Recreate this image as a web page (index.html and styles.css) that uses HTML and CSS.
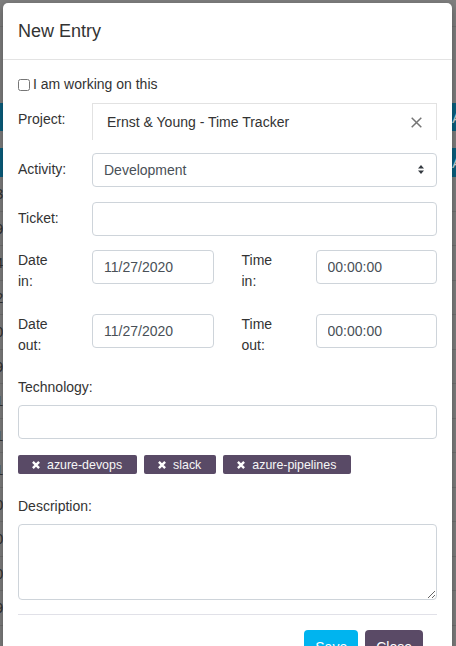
FILE: index.html
```html
<!DOCTYPE html>
<html>
<head>
<meta charset="utf-8">
<title>New Entry</title>
<link rel="stylesheet" href="styles.css">
</head>
<body>
<div class="bg">
  <div class="bg-top"></div>
  <div class="bg-nav"></div>
  <div class="bg-band b1"><span class="bg-cell">i</span><span class="bg-cell right">A</span></div>
  <div class="bg-gap"></div>
  <div class="bg-band b2"><span class="bg-cell">i</span><span class="bg-cell right">A</span></div>
  <div class="bg-row"><span class="bg-cell">3</span></div>
  <div class="bg-row"><span class="bg-cell">9</span></div>
  <div class="bg-row"><span class="bg-cell">4</span></div>
  <div class="bg-row"><span class="bg-cell">2</span></div>
  <div class="bg-row"><span class="bg-cell">0</span></div>
  <div class="bg-row"><span class="bg-cell">9</span></div>
  <div class="bg-row"><span class="bg-cell">1</span></div>
  <div class="bg-row"><span class="bg-cell">1</span></div>
  <div class="bg-row"><span class="bg-cell">1</span></div>
  <div class="bg-row"><span class="bg-cell">0</span></div>
  <div class="bg-row"><span class="bg-cell">0</span></div>
  <div class="bg-row"><span class="bg-cell">0</span></div>
  <div class="bg-row"><span class="bg-cell">9</span></div>
</div>

<div class="modal">
  <div class="modal-header">
    <h5 class="modal-title">New Entry</h5>
  </div>
  <div class="modal-body">
    <label class="check"><input type="checkbox" class="check-box"><span>I am working on this</span></label>

    <div class="row row-project">
      <label class="lbl">Project:</label>
      <div class="project-box">
        <span class="project-text">Ernst &amp; Young - Time Tracker</span>
        <svg class="clear-icon" width="11" height="11" viewBox="0 0 11 11"><path d="M0.7 0.7L10.3 10.3M10.3 0.7L0.7 10.3" stroke="#757575" stroke-width="1.5" fill="none"/></svg>
      </div>
    </div>

    <div class="row row-activity">
      <label class="lbl">Activity:</label>
      <div class="select-wrap">
        <select class="ctl sel"><option>Development</option></select>
        <svg class="sel-arrow" width="6" height="9" viewBox="0 0 4 5" preserveAspectRatio="none"><path d="M2 0L0 2h4zm0 5L0 3h4z" fill="#343a40"/></svg>
      </div>
    </div>

    <div class="row row-ticket">
      <label class="lbl">Ticket:</label>
      <input class="ctl" type="text">
    </div>

    <div class="row2 row-in">
      <div class="half">
        <label class="lbl two"><span class="wrap">Date in:</span></label>
        <input class="ctl" type="text" value="11/27/2020">
      </div>
      <div class="half">
        <label class="lbl two"><span class="wrap">Time in:</span></label>
        <input class="ctl" type="text" value="00:00:00">
      </div>
    </div>

    <div class="row2 row-out">
      <div class="half">
        <label class="lbl two"><span class="wrap">Date out:</span></label>
        <input class="ctl" type="text" value="11/27/2020">
      </div>
      <div class="half">
        <label class="lbl two"><span class="wrap">Time out:</span></label>
        <input class="ctl" type="text" value="00:00:00">
      </div>
    </div>

    <label class="block-lbl">Technology:</label>
    <input class="ctl full tech" type="text">

    <div class="tags">
      <span class="tag"><svg class="tag-x" width="8" height="8" viewBox="0 0 8 8"><path d="M0.9 0.9L7.1 7.1M7.1 0.9L0.9 7.1" stroke="#fff" stroke-width="2.4" fill="none"/></svg>azure-devops</span>
      <span class="tag"><svg class="tag-x" width="8" height="8" viewBox="0 0 8 8"><path d="M0.9 0.9L7.1 7.1M7.1 0.9L0.9 7.1" stroke="#fff" stroke-width="2.4" fill="none"/></svg>slack</span>
      <span class="tag"><svg class="tag-x" width="8" height="8" viewBox="0 0 8 8"><path d="M0.9 0.9L7.1 7.1M7.1 0.9L0.9 7.1" stroke="#fff" stroke-width="2.4" fill="none"/></svg>azure-pipelines</span>
    </div>

    <label class="block-lbl desc-lbl">Description:</label>
    <textarea class="ctl full ta"></textarea>

    <hr class="sep">

    <div class="actions">
      <button class="btn btn-save">Save</button>
      <button class="btn btn-close">Close</button>
    </div>
  </div>
</div>
</body>
</html>
```

FILE: styles.css
```css
* { box-sizing: border-box; }

html, body {
  margin: 0;
  padding: 0;
  height: 646px;
  overflow: hidden;
}

body {
  background: #7f7f7f;
  font-family: "Liberation Sans", Arial, Helvetica, sans-serif;
  font-size: 14px;
  color: #333;
  position: relative;
}

/* dimmed page behind the modal */
.bg { width: 456px; }
.bg-top { height: 27px; border-bottom: 1px solid #747474; }
.bg-nav { height: 76px; }
.bg-band {
  background: #0a6080;
  display: flex;
  justify-content: space-between;
  align-items: center;
  color: #cfd8dc;
}
.b1 { height: 28px; }
.b2 { height: 29px; }
.bg-gap { height: 17px; }
.bg-row {
  height: 34.5px;
  border-bottom: 1px solid #727272;
  display: flex;
  align-items: center;
  color: #333;
}
.bg-cell {
  margin-left: -5px;
  font-size: 15px;
}
.bg-cell.right { margin-right: -6px; }

/* modal */
.modal {
  position: absolute;
  top: 3px;
  left: 3px;
  width: 449px;
  background: #fff;
  border-radius: 5px;
  box-shadow: 0 3px 9px rgba(0, 0, 0, 0.35);
}

.modal-header {
  padding: 15px 15px;
  border-bottom: 1px solid #e3e3e3;
}

.modal-title {
  margin: 0;
  font-size: 18px;
  line-height: 26px;
  font-weight: normal;
  color: #333;
}

.modal-body {
  padding: 14px 15px 0 15px;
}

.check {
  display: flex;
  align-items: center;
  height: 21px;
  margin-bottom: 8px;
  line-height: 21px;
}

.check-box {
  width: 12px;
  height: 12px;
  margin: 0 3px 0 0;
}

.row {
  display: flex;
  align-items: flex-start;
}

.lbl {
  width: 74px;
  flex: none;
  padding-top: 6px;
  line-height: 21px;
  color: #333;
}

.lbl.two { padding-top: 0; }
.wrap { display: block; max-width: 40px; }

.row-project { margin-bottom: 13px; }
.row-activity { margin-bottom: 15px; }
.row-ticket { margin-bottom: 14px; }

.project-box {
  flex: 1;
  height: 37px;
  border: 1px solid #e2e2e2;
  border-bottom: none;
  display: flex;
  align-items: center;
  justify-content: space-between;
  padding: 0 14px 0 14px;
  color: #333;
}

.ctl {
  font-family: "Liberation Sans", Arial, Helvetica, sans-serif;
  font-size: 14px;
  color: #495057;
  height: 34px;
  border: 1px solid #ced4da;
  border-radius: 4px;
  padding: 0 11px;
  background: #fff;
  outline: none;
  margin: 0;
  display: block;
}

.row .ctl, .half .ctl { flex: 1; min-width: 0; width: 100%; }

.select-wrap {
  flex: 1;
  position: relative;
}

.sel {
  width: 100%;
  appearance: none;
  -webkit-appearance: none;
}

.sel-arrow {
  position: absolute;
  right: 13px;
  top: 12px;
}

.row2 {
  display: grid;
  grid-template-columns: 1fr 1fr;
  column-gap: 28px;
}

.half {
  display: flex;
  align-items: flex-start;
}

.row-in { margin-bottom: 22px; }
.row-out { margin-bottom: 21px; }

.block-lbl {
  display: block;
  line-height: 21px;
  margin-bottom: 7px;
  color: #333;
}

.full { width: 100%; }
.tech { margin-bottom: 16px; }

.tags {
  display: flex;
  gap: 7px;
  margin-bottom: 22px;
}

.tag {
  display: inline-flex;
  align-items: center;
  gap: 7px;
  height: 19px;
  padding: 0 15px 0 14px;
  background: #594a66;
  color: #f7f7f7;
  font-size: 12.4px;
  border-radius: 2px;
}

.tag-x { flex: none; }

.ta {
  height: 76px;
  padding: 6px 11px;
  margin-bottom: 14px;
  resize: vertical;
}

.sep {
  margin: 0 0 15px 0;
  border: 0;
  border-top: 1px solid #e1e1e8;
}

.actions {
  display: flex;
  justify-content: flex-end;
  gap: 7px;
  padding-right: 14px;
}

.btn {
  font-family: "Liberation Sans", Arial, Helvetica, sans-serif;
  font-size: 14px;
  color: #fff;
  border: 0;
  border-radius: 4px;
  height: 34px;
  padding: 0 11px;
  line-height: 34px;
}

.btn-save { background: #00b4ef; }
.btn-close { background: #5a4a66; }
```
